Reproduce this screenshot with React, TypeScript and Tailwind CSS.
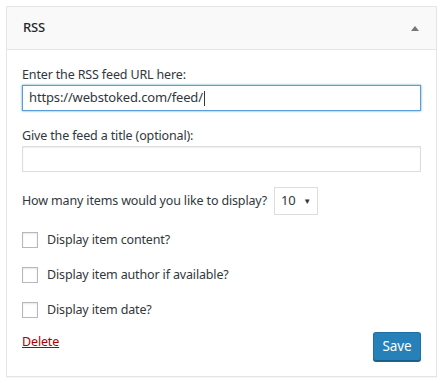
function Checkbox({ label }: { label: string }) {
  return (
    <label className="flex items-center gap-[9px] h-[16px]">
      <span className="block w-[16px] h-[16px] border border-[#b4b9be] bg-white shadow-[inset_0_1px_2px_rgba(0,0,0,0.1)]" />
      <span>{label}</span>
    </label>
  );
}

export default function App() {
  return (
    <div
      className="w-[443px] h-[383px] bg-white p-[6px] text-[12.5px] tracking-[-0.15px] text-[#32373c]"
      style={{ fontFamily: '"Noto Sans", "Open Sans", sans-serif' }}
    >
      <div className="border border-[#e5e5e5] shadow-[0_1px_1px_rgba(0,0,0,0.04)] bg-white h-[371px]">
        {/* Header */}
        <div className="flex items-center justify-between h-[43px] pl-[16px] pr-[17px] bg-[#f9f9f9] border-b border-[#e5e5e5]">
          <span className="font-medium text-[13px] text-[#23282d]">RSS</span>
          <span className="block w-0 h-0 border-l-[4px] border-r-[4px] border-b-[5px] border-l-transparent border-r-transparent border-b-[#72777c]" />
        </div>

        {/* Body */}
        <div className="px-[15px] pt-[16px] flex flex-col">
          <div className="leading-[18px]">Enter the RSS feed URL here:</div>
          <div className="mt-[1px] h-[26px] border border-[#5b9dd9] shadow-[0_0_2px_rgba(30,140,190,0.8)] flex items-center px-[6px] text-[13px]">
            https://webstoked.com/feed/
            <span className="inline-block w-px h-[15px] bg-[#32373c] ml-[1px]" />
          </div>

          <div className="leading-[18px] mt-[16px]">Give the feed a title (optional):</div>
          <div className="mt-[1px] h-[26px] border border-[#ddd] shadow-[inset_0_1px_2px_rgba(0,0,0,0.07)]" />

          <div className="mt-[15px] flex items-center gap-[7px] h-[28px]">
            <span>How many items would you like to display?</span>
            <div className="h-[28px] w-[44px] border border-[#ddd] flex items-center pl-[6px] pr-[6px] justify-between text-[13px]">
              <span>10</span>
              <span className="text-[8px] text-[#32373c]">▼</span>
            </div>
          </div>

          <div className="mt-[17px] flex flex-col gap-[19px]">
            <Checkbox label="Display item content?" />
            <Checkbox label="Display item author if available?" />
            <Checkbox label="Display item date?" />
          </div>

          <div className="mt-[14px] flex items-start justify-between">
            <a className="text-[#a00] underline mt-[1px] leading-[18px]">Delete</a>
            <button className="h-[29px] w-[48px] rounded-[3px] bg-[#2880b9] border border-[#1f6fa3] border-b-[#175d8a] text-white text-[13.5px] shadow-[0_1px_0_#1c6494]">
              Save
            </button>
          </div>
        </div>
      </div>
    </div>
  );
}
